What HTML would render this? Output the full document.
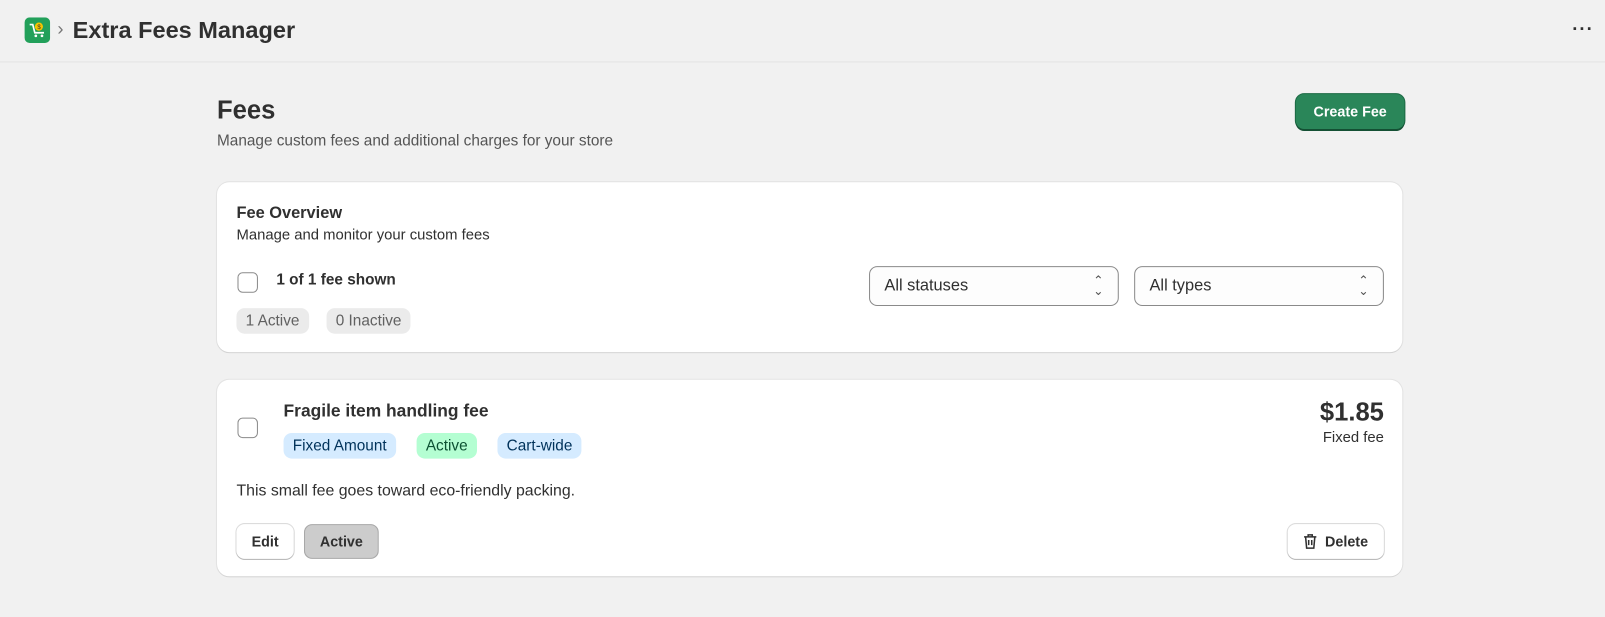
<!DOCTYPE html>
<html><head><style>
*{box-sizing:border-box;margin:0;padding:0}
body{width:1605px;height:617px;background:#f1f1f1;font-family:"Liberation Sans",sans-serif;color:#303030;position:relative;overflow:hidden}
#w{position:absolute;left:0;top:0;width:1568px;height:603px;transform:scale(1.0236);transform-origin:0 0}
.abs{position:absolute}
.top{left:0;top:0;width:1568px;height:61px;border-bottom:1px solid #e3e3e3}
.card{background:#fff;border-radius:12px;box-shadow:0 1px 0 #d4d4d4,0 0 0 1px #e3e3e3}
.cb{width:20px;height:20px;border:1.5px solid #8a8a8a;border-radius:5px;background:#fff}
.pill{border-radius:8px;font-size:15px;padding:4px 9px;display:inline-block;height:25px}
.sel{height:39px;border:1px solid #8a8a8a;border-radius:8px;background:#fdfdfd;font-size:16px;padding:10px 14px}
.btn{height:34px;border-radius:8px;font-size:14px;font-weight:bold;display:flex;align-items:center;justify-content:center;box-shadow:0 1px 0 #b5b5b5,0 0 0 1px #dcdcdc}
</style></head><body><div id="w">
<div class="abs top"></div>
<svg class="abs" style="left:24px;top:17px" width="25" height="25" viewBox="0 0 25 25"><rect width="25" height="25" rx="5" fill="#22a05a"/><path d="M5 7h3l2 8h9" stroke="#fff" stroke-width="1.6" fill="none"/><circle cx="11" cy="18" r="1.3" fill="#fff"/><circle cx="17" cy="18" r="1.3" fill="#fff"/><circle cx="14" cy="9" r="4" fill="#f5c400"/><text x="12.5" y="11.5" font-size="6" font-family="Liberation Sans" fill="#333">$</text></svg>
<div class="abs" style="left:56px;top:18px;color:#777;font-size:18px">›</div>
<div class="abs" style="left:71px;top:16px;font-size:23px;font-weight:bold;color:#303030">Extra Fees Manager</div>
<div class="abs" style="left:1536px;top:18px;font-size:18px;font-weight:bold;letter-spacing:1px">···</div>

<div class="abs" style="left:212px;top:94px;font-size:25px;font-weight:bold">Fees</div>
<div class="abs" style="left:212px;top:129px;font-size:15px;color:#555">Manage custom fees and additional charges for your store</div>
<div class="abs btn" style="left:1266px;top:92px;width:106px;background:#2a8659;color:#fff;box-shadow:0 2px 0 #145034,0 0 0 1px #1d6b45">Create Fee</div>

<div class="abs card" style="left:212px;top:178px;width:1158px;height:166px"></div>
<div class="abs" style="left:231px;top:200px;font-size:16px;font-weight:bold">Fee Overview</div>
<div class="abs" style="left:231px;top:222px;font-size:14.5px">Manage and monitor your custom fees</div>
<div class="abs cb" style="left:232px;top:266px"></div>
<div class="abs" style="left:270px;top:265px;font-size:15px;font-weight:bold;color:#303030">1 of 1 fee shown</div>
<div class="abs pill" style="left:231px;top:301px;background:#ebebeb;color:#616161">1 Active</div>
<div class="abs pill" style="left:319px;top:301px;background:#ebebeb;color:#616161">0 Inactive</div>
<div class="abs sel" style="left:849px;top:260px;width:244px">All statuses<span style="position:absolute;right:14px;top:8px;font-size:12px;color:#555;line-height:10px">⌃<br>⌄</span></div>
<div class="abs sel" style="left:1108px;top:260px;width:244px">All types<span style="position:absolute;right:14px;top:8px;font-size:12px;color:#555;line-height:10px">⌃<br>⌄</span></div>

<div class="abs card" style="left:212px;top:371px;width:1158px;height:192px"></div>
<div class="abs cb" style="left:232px;top:408px"></div>
<div class="abs" style="left:277px;top:392px;font-size:17px;font-weight:bold">Fragile item handling fee</div>
<div class="abs pill" style="left:277px;top:423px;background:#d5ebff;color:#00325a">Fixed Amount</div>
<div class="abs pill" style="left:407px;top:423px;background:#b4fed2;color:#0c5132">Active</div>
<div class="abs pill" style="left:486px;top:423px;background:#d5ebff;color:#00325a">Cart-wide</div>
<div class="abs" style="left:1200px;top:389px;width:152px;text-align:right;font-size:25px;font-weight:bold">$1.85</div>
<div class="abs" style="left:1200px;top:420px;width:152px;text-align:right;font-size:14.5px">Fixed fee</div>
<div class="abs" style="left:231px;top:471px;font-size:15.5px">This small fee goes toward eco-friendly packing.</div>
<div class="abs btn" style="left:231px;top:512px;width:56px;background:#fff">Edit</div>
<div class="abs btn" style="left:297px;top:512px;width:73px;background:#cccccc;box-shadow:inset 0 0 0 1px #a8a8a8">Active</div>
<div class="abs btn" style="left:1258px;top:512px;width:94px;background:#fff"><svg width="14" height="16" viewBox="0 0 14 16" style="margin-right:7px"><path d="M1 3.5h12M5 3.5V1.5h4v2M2.5 3.5l1 11h7l1-11M5.5 6.5v5M8.5 6.5v5" stroke="#303030" stroke-width="1.5" fill="none"/></svg>Delete</div>
</div></body></html>
